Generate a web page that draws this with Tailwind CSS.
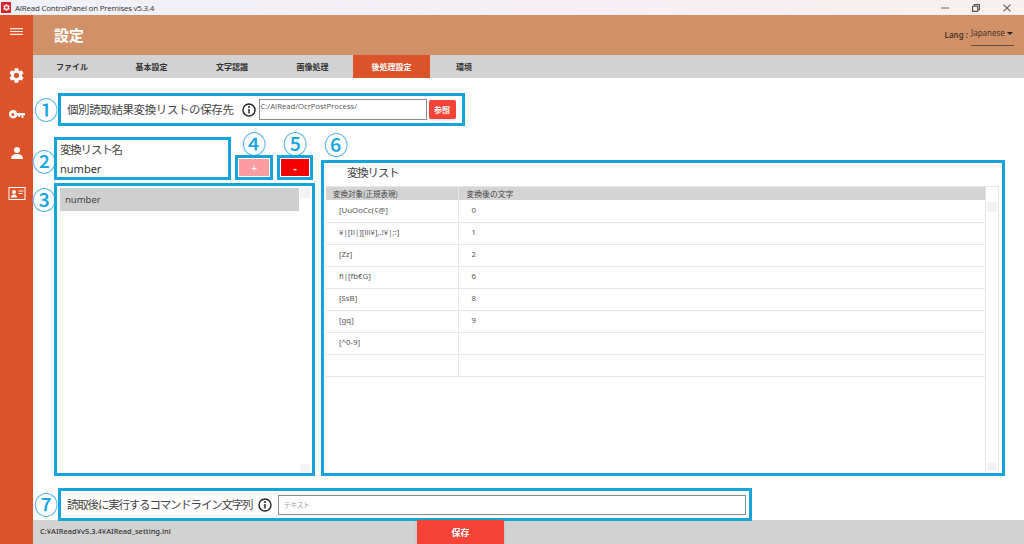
<!DOCTYPE html>
<html lang="ja">
<head>
  <meta charset="UTF-8">
  <title>AIRead ControlPanel on Premises</title>
  <script src="https://cdn.jsdelivr.net/npm/@tailwindcss/browser@4"></script>
</head>
<body class="w-[1024px] h-[544px] overflow-hidden bg-white font-['Noto_Sans','Noto_Sans_CJK_JP',sans-serif] text-[#444]">

  <!-- title bar -->
  <div class="h-[15px] flex items-center bg-gradient-to-r from-[#f0f1f8] via-[#f6eff6] to-[#f8f1ee]">
    <div class="w-[10px] h-[11px] ml-[1px] bg-[#d8232a] flex items-center justify-center">
      <svg class="w-[7px] h-[7px]" viewBox="2 2 20 20"><path fill="#fff" d="M19.140 12.940c.04-.3.06-.61.06-.94 0-.32-.02-.64-.07-.94l2.030-1.580a.49.49 0 00.12-.61l-1.920-3.320a.488.488 0 00-.59-.22l-2.390.96c-.5-.38-1.030-.7-1.620-.94l-.36-2.540a.484.484 0 00-.48-.41h-3.840c-.24 0-.43.17-.47.41l-.36 2.540c-.59.24-1.130.57-1.620.94l-2.390-.96c-.22-.08-.47 0-.59.22L2.740 8.870c-.12.21-.08.47.12.61l2.030 1.580c-.05.3-.09.63-.09.94s.02.64.07.94l-2.030 1.580a.49.49 0 00-.12.61l1.920 3.320c.12.22.37.29.59.22l2.390-.96c.5.38 1.030.7 1.620.94l.36 2.540c.05.24.24.41.48.41h3.840c.24 0 .44-.17.47-.41l.36-2.540c.59-.24 1.130-.56 1.620-.94l2.390.96c.22.08.47 0 .59-.22l1.920-3.320c.12-.22.07-.47-.12-.61l-2.010-1.580zM12 15.600c-1.980 0-3.600-1.620-3.600-3.600s1.620-3.600 3.600-3.600 3.600 1.620 3.600 3.600-1.620 3.600-3.600 3.600z"/></svg>
    </div>
    <span class="ml-[4px] text-[8px] tracking-[-0.25px] leading-none text-[#333] font-['Open_Sans',sans-serif]">AIRead ControlPanel on Premises v5.3.4</span>
    <div class="ml-auto flex items-center gap-[23px] mr-[13px]">
      <svg class="w-[8px] h-[8px]" viewBox="0 0 7 7"><path d="M0 3.500h7" stroke="#777" stroke-width="1"/></svg>
      <svg class="w-[8px] h-[8px]" viewBox="0 0 7 7"><path d="M.5 2h4.500v4.500h-4.500zM2 2V.5h4.500V5H5" fill="none" stroke="#555" stroke-width="1"/></svg>
      <svg class="w-[8px] h-[8px]" viewBox="0 0 7 7"><path d="M.5.5l6 6M6.500.5l-6 6" stroke="#555" stroke-width=".9"/></svg>
    </div>
  </div>

  <div class="flex h-[529px]">
    <!-- sidebar -->
    <aside class="w-[33px] shrink-0 bg-[#dc5229] flex flex-col items-center">
      <svg class="mt-[13px] w-[13px] h-[7px]" viewBox="0 0 13 7"><path d="M0 .6h13M0 3.500h13M0 6.400h13" stroke="#fff" stroke-width="1.100" opacity=".9"/></svg>
      <svg class="mt-[33px] w-[15px] h-[15px]" viewBox="2 2 20 20"><path fill="#fff" d="M19.140 12.940c.04-.3.06-.61.06-.94 0-.32-.02-.64-.07-.94l2.030-1.580a.49.49 0 00.12-.61l-1.920-3.320a.488.488 0 00-.59-.22l-2.390.96c-.5-.38-1.030-.7-1.620-.94l-.36-2.540a.484.484 0 00-.48-.41h-3.840c-.24 0-.43.17-.47.41l-.36 2.540c-.59.24-1.130.57-1.620.94l-2.390-.96c-.22-.08-.47 0-.59.22L2.740 8.870c-.12.21-.08.47.12.61l2.030 1.580c-.05.3-.09.63-.09.94s.02.64.07.94l-2.030 1.580a.49.49 0 00-.12.61l1.920 3.320c.12.22.37.29.59.22l2.390-.96c.5.38 1.030.7 1.620.94l.36 2.540c.05.24.24.41.48.41h3.840c.24 0 .44-.17.47-.41l.36-2.540c.59-.24 1.130-.56 1.620-.94l2.390.96c.22.08.47 0 .59-.22l1.920-3.320c.12-.22.07-.47-.12-.61l-2.010-1.580zM12 15.600c-1.980 0-3.600-1.620-3.600-3.600s1.620-3.600 3.600-3.600 3.600 1.620 3.600 3.600-1.620 3.600-3.600 3.600z"/></svg>
      <svg class="mt-[27px] w-[16px] h-[9px]" viewBox="0 0 16 9"><path fill="#fff" fill-rule="evenodd" d="M4.200 0a4.200 4.200 0 014 3H16v2.400h-1.500V8h-2V5.400h-1.300V7H9.300V5.400H8.200A4.200 4.200 0 114.200 0zm-.4 2.900a1.500 1.500 0 100 3 1.500 1.500 0 000-3z"/></svg>
      <svg class="mt-[28px] w-[12px] h-[12px]" viewBox="0 0 12 12"><circle cx="6" cy="3" r="3" fill="#fff"/><path d="M0 12c0-3 2-5 6-5s6 2 6 5z" fill="#fff"/></svg>
      <svg class="mt-[28px] w-[18px] h-[13px]" viewBox="0 0 17 13"><rect x=".5" y=".5" width="16" height="12" fill="none" stroke="#fff"/><circle cx="5.500" cy="5" r="2" fill="#fff"/><path d="M2.500 10.500c0-2 1-3 3-3s3 1 3 3z" fill="#fff"/><path d="M10 4h5M10 6.500h4" stroke="#fff"/></svg>
    </aside>

    <div class="flex-1 min-w-0 flex flex-col">
      <!-- header -->
      <header class="h-[40px] bg-[#d09068] flex items-center pl-[21px]">
        <h1 class="text-[15px] font-bold text-white">設定</h1>
        <div class="ml-auto mr-[10px] flex items-center text-[8px] text-[#4a3328]">
          <span class="font-semibold mr-[3px]">Lang :</span>
          <div class="w-[43px] h-[20px] mt-[2px] border-b border-[#6a4a38] flex justify-between pt-[2px] pr-[1px]">
            <span class="leading-[10px]">Japanese</span>
            <span class="w-0 h-0 mt-[4px] border-x-[3px] border-x-transparent border-t-[3px] border-t-[#222]"></span>
          </div>
        </div>
      </header>

      <!-- tabs -->
      <nav class="h-[23px] bg-[#d2d2d2] flex text-[8px] font-semibold text-[#333]">
        <a class="w-[78px] flex items-center justify-center">ファイル</a>
        <a class="w-[81px] flex items-center justify-center">基本設定</a>
        <a class="w-[80px] flex items-center justify-center">文字認識</a>
        <a class="w-[81px] flex items-center justify-center">画像処理</a>
        <a class="w-[77px] flex items-center justify-center bg-[#dc5229] text-white">後処理設定</a>
        <a class="w-[68px] flex items-center justify-center">環境</a>
      </nav>

      <main class="flex-1 flex flex-col pl-[3px]">
        <!-- 1 -->
        <div class="mt-[15px] h-[33px] flex items-center">
          <span class="-ml-[2px] w-[24px] text-[24px] leading-none font-medium text-[#1aa7df]">①</span>
          <div class="w-[407px] h-[33px] border-[3px] border-[#14a5dc] flex items-center pl-[6px]">
            <span class="text-[11.500px] tracking-[-0.4px] text-[#444] whitespace-nowrap">個別読取結果変換リストの保存先</span>
            <svg class="ml-[8px] w-[14px] h-[14px] shrink-0" viewBox="0 0 14 14"><circle cx="7" cy="7" r="6" fill="none" stroke="#222" stroke-width="1.400"/><path d="M7 6v4.500" stroke="#222" stroke-width="1.500"/><circle cx="7" cy="4" r="1" fill="#222"/></svg>
            <div class="ml-[3px] w-[168px] h-[21px] shrink-0 border border-[#8a8a8a] text-[7.700px] leading-[12px] pl-[1px] text-[#555] font-['Open_Sans',sans-serif]">C:/AIRead/OcrPostProcess/</div>
            <button class="ml-[2px] w-[27px] h-[19px] shrink-0 rounded-[2px] bg-[#f44336] text-white text-[8px] font-semibold shadow-sm">参照</button>
          </div>
        </div>

        <!-- middle -->
        <div class="mt-[7px] h-[343px] flex">
          <div class="w-[279px] shrink-0 flex flex-col">
            <div class="h-[50px] flex items-end">
              <span class="-ml-[4px] w-[22px] mb-[9px] text-[24px] leading-none font-medium text-[#1aa7df]">②</span>
              <div class="w-[177px] h-[43px] mb-[3px] border-[3px] border-[#14a5dc] px-[3px] text-[#333]">
                <div class="text-[11.500px] tracking-[-1.200px] leading-[19px] text-[#444]">変換リスト名</div>
                <div class="text-[11px] leading-[19px]">number</div>
              </div>
              <div class="ml-[4px] mb-[3px] w-[38px] flex flex-col items-center">
                <span class="text-[24px] leading-[22px] font-medium text-[#1aa7df]">④</span>
                <div class="w-[38px] h-[25px] border-[3px] border-[#14a5dc] p-[1px] flex"><button class="w-full h-full bg-[#fb9ca0] text-white text-[10px] leading-none">+</button></div>
              </div>
              <div class="ml-[4px] mb-[3px] w-[36px] flex flex-col items-center">
                <span class="text-[24px] leading-[22px] font-medium text-[#1aa7df]">⑤</span>
                <div class="w-[36px] h-[25px] border-[3px] border-[#14a5dc] p-[1px] flex"><button class="w-full h-full bg-[#f40000] text-white text-[10px] leading-none font-bold">-</button></div>
              </div>
            </div>
            <div class="h-[293px] flex items-start">
              <span class="-ml-[4px] w-[22px] mt-[5px] text-[24px] leading-none font-medium text-[#1aa7df]">③</span>
              <div class="relative w-[261px] h-[293px] border-[3px] border-[#14a5dc] pl-[3px] pt-[2px]">
                <div class="w-[239px] h-[23px] pl-[5px] bg-[#cfcfcf] text-[9.500px] leading-[23px] text-[#444]">number</div>
                <span class="absolute right-[2px] top-[3px] w-[10px] h-[9px] bg-[#f3f3f3]"></span>
                <span class="absolute right-[2px] bottom-[1px] w-[10px] h-[8px] bg-[#f3f3f3]"></span>
              </div>
            </div>
          </div>

          <div class="ml-[6px] w-[684px] shrink-0 flex flex-col">
            <span class="h-[27px] pl-[3px] text-[24px] leading-[24px] font-medium text-[#1aa7df]">⑥</span>
            <div class="relative h-[316px] border-[3px] border-[#14a5dc] pl-[2px]">
              <div class="h-[23px] pl-[21px] text-[11.500px] tracking-[-1.200px] leading-[19px] text-[#444]">変換リスト</div>
              <div class="w-[673px] h-[286px] border-t border-r border-[#e6e6e6] flex">
                <table class="w-[660px] h-fit table-fixed border-collapse text-[7.800px] text-[#555]">
                  <colgroup><col class="w-[132px]"><col></colgroup>
                  <thead>
                    <tr class="h-[13px] bg-[#d4d4d4] font-['Noto_Sans_CJK_JP',sans-serif] text-[#444]">
                      <th class="pl-[7px] text-[7.500px] font-normal text-left border-r border-[#e6e6e6]">変換対象(正規表現)</th>
                      <th class="pl-[8px] font-normal text-left">変換後の文字</th>
                    </tr>
                  </thead>
                  <tbody>
                    <tr class="h-[22px] border-b border-[#e6e6e6]"><td class="pl-[13px] border-r border-[#e6e6e6]">[UuOoCc(¢@]</td><td class="pl-[13px]">0</td></tr>
                    <tr class="h-[22px] border-b border-[#e6e6e6]"><td class="pl-[13px] border-r border-[#e6e6e6]">¥|[Il|][lli¥],.!¥|;:]</td><td class="pl-[13px]">1</td></tr>
                    <tr class="h-[22px] border-b border-[#e6e6e6]"><td class="pl-[13px] border-r border-[#e6e6e6]">[Zz]</td><td class="pl-[13px]">2</td></tr>
                    <tr class="h-[22px] border-b border-[#e6e6e6]"><td class="pl-[13px] border-r border-[#e6e6e6]">fi|[fb€G]</td><td class="pl-[13px]">6</td></tr>
                    <tr class="h-[22px] border-b border-[#e6e6e6]"><td class="pl-[13px] border-r border-[#e6e6e6]">[SsB]</td><td class="pl-[13px]">8</td></tr>
                    <tr class="h-[22px] border-b border-[#e6e6e6]"><td class="pl-[13px] border-r border-[#e6e6e6]">[gq]</td><td class="pl-[13px]">9</td></tr>
                    <tr class="h-[22px] border-b border-[#e6e6e6]"><td class="pl-[13px] border-r border-[#e6e6e6]">[^0-9]</td><td></td></tr>
                    <tr class="h-[22px] border-b border-[#e6e6e6]"><td class="border-r border-[#e6e6e6]"></td><td></td></tr>
                  </tbody>
                </table>
                <div class="w-[13px] border-l border-[#e6e6e6] flex flex-col justify-between items-center pt-[15px] pb-[1px]">
                  <span class="w-[10px] h-[10px] bg-[#f3f3f3]"></span>
                  <span class="w-[10px] h-[8px] bg-[#f3f3f3]"></span>
                </div>
              </div>
            </div>
          </div>
        </div>

        <!-- 7 -->
        <div class="relative z-10 mt-[12px] -mb-px h-[33px] flex items-center">
          <span class="-ml-[2px] w-[24px] text-[24px] leading-none font-medium text-[#1aa7df]">⑦</span>
          <div class="w-[694px] h-[33px] border-[3px] border-[#14a5dc] bg-white flex items-center pl-[6px]">
            <span class="text-[11.500px] tracking-[-1.200px] text-[#444] whitespace-nowrap">読取後に実行するコマンドライン文字列</span>
            <svg class="ml-[6px] w-[14px] h-[14px] shrink-0" viewBox="0 0 14 14"><circle cx="7" cy="7" r="6" fill="none" stroke="#222" stroke-width="1.400"/><path d="M7 6v4.500" stroke="#222" stroke-width="1.500"/><circle cx="7" cy="4" r="1" fill="#222"/></svg>
            <div class="ml-[6px] flex-1 mr-[3px] h-[20px] border border-[#8a8a8a] text-[7.500px] tracking-[-1px] leading-[18px] pl-[4px] text-[#aaa]">テキスト</div>
          </div>
        </div>

        <!-- footer -->
        <footer class="-ml-[3px] h-[24px] bg-[#d2d2d2] relative flex items-center pl-[7px] text-[7.500px] font-medium text-[#333]">
          <span>C:¥AIRead¥v5.3.4¥AIRead_setting.ini</span>
          <button class="absolute z-20 left-[384px] top-0 w-[87px] h-[25px] bg-[#f44336] text-white text-[9px] font-semibold shadow-sm">保存</button>
        </footer>
      </main>
    </div>
  </div>
</body>
</html>
